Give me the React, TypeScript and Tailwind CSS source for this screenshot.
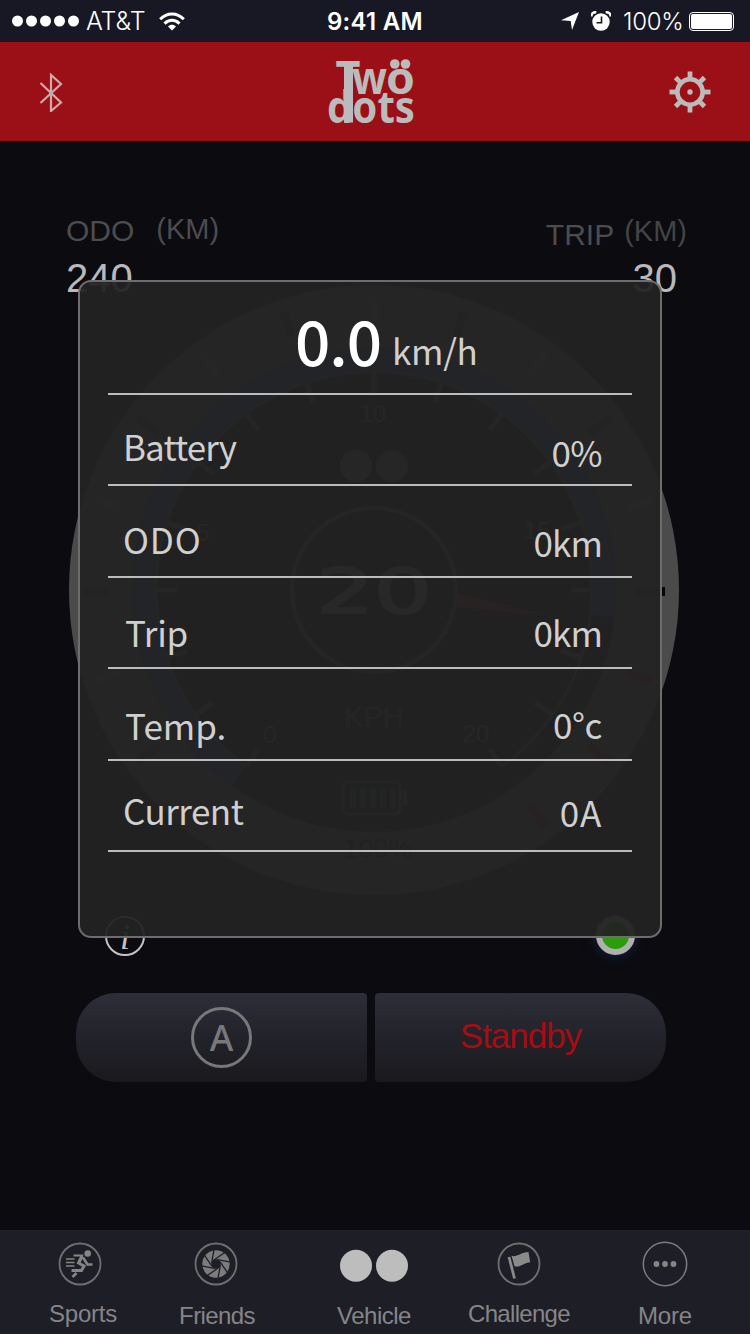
import type { ReactNode } from "react";

const OUTER_TICKS = [-144, -126, -108, -72, -54, -36, -18, 0, 18, 36, 54, 72, 108, 126, 144];
const INNER_TICKS = [-144, -125, -108, -90, -72, -54, -36, -18, 0, 18, 36, 54, 72, 90, 108, 125, 144];

const StatusBar = () => {
  return (
    <div className="flex h-[42px] shrink-0 items-center justify-between bg-[#171823] pl-[12px] pr-[16px] font-['Inter',sans-serif] text-[24px] leading-none text-white">
      <div className="flex w-[300px] items-center">
        <svg width="68" height="12" viewBox="0 0 68 12" fill="#fff">
          <circle cx="5.5" cy="6" r="5.5" />
          <circle cx="19.5" cy="6" r="5.5" />
          <circle cx="33.5" cy="6" r="5.5" />
          <circle cx="47.5" cy="6" r="5.5" />
          <circle cx="61.5" cy="6" r="5.5" />
        </svg>
        <span className="ml-[6px] w-[60px] whitespace-nowrap pt-px text-[25px] font-light tracking-[-0.1px]">AT&amp;T</span>
        <svg className="ml-[13px]" width="26" height="19" viewBox="0 0 26 19" fill="none" stroke="#fff" strokeWidth="3">
          <path d="M1.2 7.2C8 .2 18 .2 24.8 7.2" />
          <path d="M5.5 11.6c4.4-4.4 10.6-4.4 15 0" />
          <path d="M13 18.6l-4-4.2c2.4-2.2 5.600-2.200 8 0z" fill="#fff" stroke="none" />
        </svg>
      </div>
      <span className="ml-[3px] whitespace-nowrap pt-px text-[24px] font-semibold tracking-[0.3px]">9:41 AM</span>
      <div className="flex w-[299px] items-center justify-end">
        <svg width="18" height="18" viewBox="0 0 18 18" fill="#fff">
          <path d="M18 0L11 18 9.700 9 0 8.200z" />
        </svg>
        <svg className="ml-[12px]" width="20" height="20" viewBox="0 0 20 20">
          <circle cx="10" cy="11" r="8.700" fill="#fff" />
          <path d="M.5 5.500C.2 2.500 2.500 1 5.300 1.200M19.500 5.500c.3-3-2-4.500-4.800-4.300" fill="none" stroke="#fff" strokeWidth="2.400" />
          <path d="M10.500 5.500v6.300H5.500" fill="none" stroke="#171823" strokeWidth="1.600" />
        </svg>
        <span className="ml-[12px] w-[61px] whitespace-nowrap pt-px font-light tracking-[-0.3px]">100%</span>
        <div className="ml-[5px] h-[19px] w-[45px] rounded-[4px] border border-white p-px">
          <div className="h-full w-full rounded-[2px] bg-white" />
        </div>
      </div>
    </div>
  );
};

const Logo = () => {
  return (
    <svg
      className="overflow-visible"
      width="88"
      height="70"
      viewBox="327 56 88 70"
      fill="#bbb"
      fontFamily="'Noto Sans', sans-serif"
      fontWeight="700"
      fontSize="44"
    >
      <text x="335.500" y="92" textLength="25" lengthAdjust="spacingAndGlyphs">T</text>
      <text x="352" y="92.500" textLength="35" lengthAdjust="spacingAndGlyphs">w</text>
      <text x="386" y="93" textLength="29" lengthAdjust="spacingAndGlyphs">ö</text>
      <circle cx="394.800" cy="63" r="4.800" />
      <circle cx="405.500" cy="63" r="4.800" />
      <rect x="344" y="62" width="9" height="59.500" />
      <text x="327" y="121.500" textLength="88" lengthAdjust="spacingAndGlyphs">dots</text>
    </svg>
  );
};

const Header = () => {
  return (
    <header className="flex h-[99px] shrink-0 items-center justify-between bg-[#9b1017] px-[39px]">
      <svg width="24" height="40" viewBox="0 0 24 40" fill="none" stroke="#cfa9a8" strokeWidth="2.200">
        <path d="M1.500 11L22 30.500 12 39V3L22 12 1.500 31" />
        <circle cx="12" cy="21" r="2" fill="#a9b3b8" stroke="none" />
      </svg>
      <div className="ml-[10px]">
        <Logo />
      </div>
      <svg width="42" height="42" viewBox="-21 -21 42 42" fill="none" stroke="#bbb">
        <circle r="12.700" strokeWidth="4.600" />
        <circle r="2.700" fill="#bbb" stroke="none" />
        {[0, 45, 90, 135, 180, 225, 270, 315].map((deg) => (
          <path key={deg} d="M0-14V-20.500" strokeWidth="4.800" transform={`rotate(${deg})`} />
        ))}
      </svg>
    </header>
  );
};

const Readings = () => {
  return (
    <div className="flex h-[144px] shrink-0 justify-between pl-[66px] pr-[63px] pt-[74px] leading-none text-[#4c4c4e]">
      <div>
        <div className="flex h-[43px] items-start">
          <span className="mt-px text-[30px]">ODO</span>
          <span className="ml-[22px] text-[29px]">(KM)</span>
        </div>
        <div className="text-[40px] text-[#b9b9bb]">240</div>
      </div>
      <div>
        <div className="flex h-[43px] items-start">
          <span className="mt-[5px] text-[30px]">TRIP</span>
          <span className="ml-[10px] mt-[2px] text-[29px] text-[#444]">(KM)</span>
        </div>
        <div className="pr-[10px] text-right text-[40px] text-[#b9b9bb]">30</div>
      </div>
    </div>
  );
};

const Gauge = () => {
  return (
    <svg
      className="ml-[69px] shrink-0"
      width="611"
      height="610"
      viewBox="-305 -305 611 610"
      fontFamily="'Liberation Sans', Arial, sans-serif"
      textAnchor="middle"
    >
      <circle r="305" fill="#4b4b4b" />
      {OUTER_TICKS.map((deg) => (
        <rect
          key={deg}
          x="-4"
          y="-292"
          width="8"
          height="26"
          fill={deg > 100 ? "#7a1010" : deg % 36 === 0 ? "#6c6c6c" : "#2c2c2c"}
          transform={`rotate(${deg})`}
        />
      ))}
      <rect x="-291" y="-3" width="26" height="9" fill="#252525" />
      <rect x="262" y="-3" width="26" height="9" fill="#252525" />
      <rect x="286" y="-3" width="5" height="9" fill="#050505" />
      <circle r="242" fill="#101010" />
      {/* lit part of the speed band */}
      <path d="M-135.200 186A230 230 0 1 1 228.500 26" fill="none" stroke="#2c3a70" strokeWidth="24" />
      <path d="M-128 176.300A218 218 0 1 1 128 176.300" fill="none" stroke="#4c4c4c" strokeWidth="3" />
      {INNER_TICKS.map((deg) => (
        <rect key={deg} x="-2.500" y="-217" width="5" height="20" fill="#565656" transform={`rotate(${deg})`} />
      ))}
      <g fill="#6c6c6c" fontSize="24">
        <text x="-104" y="153">0</text>
        <text x="-171" y="-49">5</text>
        <text x="-1" y="-168">10</text>
        <text x="163" y="-51">15</text>
        <text x="102" y="152">20</text>
      </g>
      <circle cx="-18" cy="-124" r="16" fill="#666" />
      <circle cx="18" cy="-124" r="16" fill="#666" />
      <circle r="82" fill="none" stroke="#555" strokeWidth="4" />
      <text
        x="0"
        y="23"
        fontSize="62"
        fontFamily="'DejaVu Sans', sans-serif"
        textLength="116"
        lengthAdjust="spacingAndGlyphs"
        fill="#808080"
        stroke="#808080"
        strokeWidth="2"
      >
        20
      </text>
      <path d="M83 3L172 26 83 17z" fill="#8f1515" />
      <text x="0" y="137" fontSize="29" fill="#555">KPH</text>
      <rect x="-31" y="192" width="57" height="32" rx="5" fill="none" stroke="#555" strokeWidth="3" />
      <rect x="29" y="200" width="4" height="16" fill="#555" />
      <g fill="#34503f">
        <rect x="-24" y="198" width="6" height="20" />
        <rect x="-14" y="198" width="6" height="20" />
        <rect x="-4" y="198" width="6" height="20" />
        <rect x="6" y="198" width="6" height="20" />
        <rect x="16" y="198" width="6" height="20" />
      </g>
      <text x="4" y="268" fontSize="27" fill="#111">100%</text>
    </svg>
  );
};

const Indicators = () => {
  return (
    <div className="flex h-[98px] shrink-0 items-start justify-between pl-[105px] pr-[115px] pt-[21px]">
      <div className="flex h-[40px] w-[40px] items-center justify-center rounded-full border-2 border-[#c4c4c4] font-['Liberation_Serif',serif] text-[36px] italic leading-none text-[#c4c4c4]">
        <span className="mt-[2px]">i</span>
      </div>
      <div className="h-[39px] w-[39px] rounded-full border-[6px] border-[#b0b0b3] bg-[#2b9c0a] shadow-[0_0_14px_#18284a]" />
    </div>
  );
};

const Controls = () => {
  return (
    <div className="flex h-[89px] shrink-0 gap-[8px] pl-[76px]">
      <button className="flex w-[291px] items-center justify-center rounded-l-[40px] rounded-r-[4px] bg-linear-to-b from-[#2e2e3a] via-[#22222a] to-[#1a1a1d]">
        <span className="flex h-[61px] w-[61px] items-center justify-center rounded-full border-[3px] border-[#78787b] font-['Noto_Sans',sans-serif] text-[36px] font-medium leading-none text-[#78787b]">
          A
        </span>
      </button>
      <button className="flex w-[291px] items-center justify-center rounded-l-[4px] rounded-r-[40px] bg-linear-to-b from-[#2e2e3a] via-[#22222a] to-[#1a1a1d] text-[35px] leading-none tracking-[-1px] text-[#a50d13]">
        <span className="-mt-[4px]">Standby</span>
      </button>
    </div>
  );
};

const rows = [
  { label: "Battery", value: "0%", row: "h-[91px]", labelPos: "mt-[33px] ml-[15px] tracking-[-0.9px]", valuePos: "mt-[39px] tracking-[-0.6px]" },
  { label: "ODO", value: "0km", row: "h-[92px]", labelPos: "mt-[35px] ml-[15px] tracking-[0.8px]", valuePos: "mt-[38px] tracking-[-0.9px]" },
  { label: "Trip", value: "0km", row: "h-[91px]", labelPos: "mt-[36px] ml-[17px] tracking-[-0.3px]", valuePos: "mt-[36px] tracking-[-0.9px]" },
  { label: "Temp.", value: "0°c", row: "h-[92px]", labelPos: "mt-[38px] ml-[17px]", valuePos: "mt-[37px] tracking-[-0.4px]" },
  { label: "Current", value: "0A", row: "h-[91px]", labelPos: "mt-[31px] ml-[15px] tracking-[-0.5px]", valuePos: "mt-[33px] tracking-[0.8px]" },
];

const StatsDialog = () => {
  return (
    <div className="absolute left-[78px] top-[280px] flex h-[658px] w-[584px] flex-col rounded-[13px] border-2 border-[#6d6d6d] bg-[#232323]/95 px-[28px] font-['Noto_Sans_CJK_SC',sans-serif] text-[35px] leading-[36px] text-[#d0d0d0]">
      <div className="flex h-[113px] shrink-0 items-start border-b-2 border-[#bcbcbc] pl-[187px]">
        <span className="mt-[25px] w-[97px] whitespace-nowrap text-[62px] font-medium leading-[64px] tracking-[-1px] text-white">0.0</span>
        <span className="mt-[50px] tracking-[-0.3px]">km/h</span>
      </div>
      {rows.map((r) => (
        <div key={r.label} className={`flex shrink-0 items-start justify-between border-b-2 border-[#bcbcbc] pr-[30px] ${r.row}`}>
          <span className={r.labelPos}>{r.label}</span>
          <span className={r.valuePos}>{r.value}</span>
        </div>
      ))}
    </div>
  );
};

const RunnerIcon = () => (
  <svg className="-ml-[7px]" width="44" height="44" viewBox="-22 -22 44 44" fill="none" stroke="#858585">
    <circle r="20.500" strokeWidth="1.800" stroke="#6f6f70" />
    <circle cx="7.700" cy="-10.500" r="3.300" fill="#858585" stroke="none" />
    <path d="M-14-5H-5.500M-14-1.500H-5.500M-14 2H-5.500" strokeWidth="1.600" />
    <path d="M-6.500-8.500H2L-1 0" strokeWidth="2.200" />
    <path d="M2-8L-1.500-1 4 2 1.500 6.500H-8.500" strokeWidth="3" />
    <path d="M3-6.500L7.500.5H12.500" strokeWidth="2.600" />
    <path d="M-3.500 9L-7.500 13" strokeWidth="2.600" />
  </svg>
);

const ApertureIcon = () => (
  <svg className="-ml-[3px]" width="44" height="44" viewBox="-22 -22 44 44">
    <circle r="20.500" fill="none" stroke="#6f6f70" strokeWidth="1.800" />
    <circle r="13.700" fill="#7c7c7c" />
    <circle r="4.800" fill="#1e1e27" />
    {[0, 45, 90, 135, 180, 225, 270, 315].map((deg) => (
      <path key={deg} d="M-4.500-.5L-5-14" stroke="#1e1e27" strokeWidth="1.300" transform={`rotate(${deg + 12})`} />
    ))}
  </svg>
);

const VehicleIcon = () => (
  <svg width="70" height="44" viewBox="-35 -22 70 44" fill="#bdbdbd">
    <circle cx="-18" cy="1.700" r="16" />
    <circle cx="18" cy="1.700" r="16" />
  </svg>
);

const FlagIcon = () => (
  <svg width="44" height="44" viewBox="-22 -22 44 44">
    <circle r="20.500" fill="none" stroke="#6f6f70" strokeWidth="1.800" />
    <path d="M-10-7L-4.500 14.500" stroke="#8a8a8a" strokeWidth="2.800" />
    <path d="M-7.500-8.200C-3-6 2-12 9.500-12L11.200-1.800C5-1.500 1 4-4.500 2.200z" fill="#8a8a8a" />
  </svg>
);

const MoreIcon = () => (
  <svg width="46" height="46" viewBox="-23 -23 46 46">
    <circle r="21.700" fill="none" stroke="#7c7c7e" strokeWidth="1.500" />
    <circle cx="-8.500" r="2.900" fill="#858585" />
    <circle r="2.900" fill="#858585" />
    <circle cx="8.500" r="2.900" fill="#858585" />
  </svg>
);

type TabProps = { label: string; className: string; labelClass: string; children: ReactNode };

const Tab = ({ label, className, labelClass, children }: TabProps) => (
  <div className={`flex flex-col items-center ${className}`}>
    <div className="flex h-[44px] items-center justify-center">{children}</div>
    <span className={`whitespace-nowrap text-[24px] leading-none text-[#858587] ${labelClass}`}>{label}</span>
  </div>
);

const TabBar = () => {
  return (
    <nav className="flex h-[104px] shrink-0 bg-[#1e1e27] pl-[49px] pt-[12px]">
      <Tab label="Sports" className="w-[68px]" labelClass="mt-[16px] tracking-[-0.2px]">
        <RunnerIcon />
      </Tab>
      <Tab label="Friends" className="ml-[62px] w-[76px]" labelClass="mt-[18px] tracking-[-0.6px]">
        <ApertureIcon />
      </Tab>
      <Tab label="Vehicle" className="ml-[82px] w-[74px]" labelClass="mt-[18px] tracking-[-0.5px]">
        <VehicleIcon />
      </Tab>
      <Tab label="Challenge" className="ml-[57px] w-[102px]" labelClass="mt-[16px] tracking-[-0.7px]">
        <FlagIcon />
      </Tab>
      <Tab label="More" className="ml-[68px] w-[54px]" labelClass="mt-[18px] tracking-[-0.2px]">
        <MoreIcon />
      </Tab>
    </nav>
  );
};

const App = () => {
  return (
    <div className="relative flex h-[1334px] w-[750px] flex-col overflow-hidden bg-[#0b0b10] font-['Liberation_Sans',Arial,sans-serif]">
      <StatusBar />
      <Header />
      <main className="flex flex-1 flex-col">
        <Readings />
        <Gauge />
        <Indicators />
        <Controls />
      </main>
      <TabBar />
      <StatsDialog />
    </div>
  );
};

export default App;
